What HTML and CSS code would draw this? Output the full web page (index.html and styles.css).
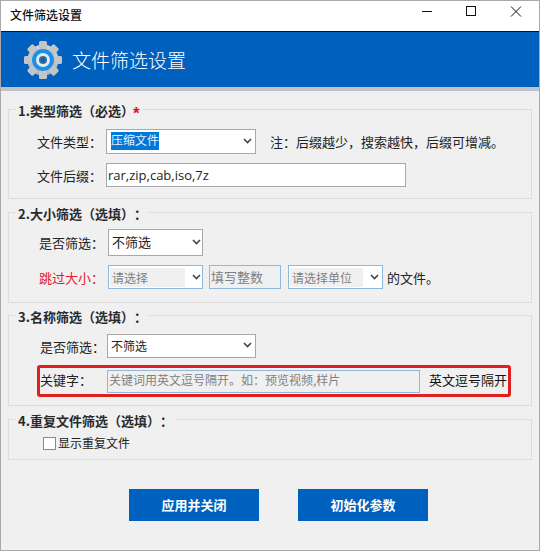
FILE: index.html
```html
<!DOCTYPE html>
<html lang="zh-CN">
<head>
<meta charset="utf-8">
<title>文件筛选设置</title>
<link rel="stylesheet" href="styles.css">
</head>
<body>
<div class="window">
  <div class="titlebar">
    <span class="title">文件筛选设置</span>
    <div class="winctrls">
      <svg width="100" height="16" viewBox="0 0 100 16" fill="none" stroke="#111" stroke-width="1">
        <path d="M0 6.5H10"/>
        <rect x="44.5" y="1.5" width="9" height="9"/>
        <path d="M89 1.5L99 11.5M99 1.5L89 11.5"/>
      </svg>
    </div>
  </div>
  <div class="banner">
    <svg class="gear" width="40" height="40" viewBox="-20 -20 40 40">
      <defs>
        <linearGradient id="g" x1="0" y1="0" x2="0" y2="1">
          <stop offset="0" stop-color="#d4d6d8"/>
          <stop offset="1" stop-color="#aeb3b8"/>
        </linearGradient>
      </defs>
      <g fill="url(#g)">
        <circle r="15.5"/>
      </g>
      <g fill="#c3c6c9">
        <rect x="-4" y="-19" width="8" height="38" rx="1.5"/>
        <rect x="-4" y="-19" width="8" height="38" rx="1.5" transform="rotate(45)"/>
        <rect x="-4" y="-19" width="8" height="38" rx="1.5" transform="rotate(90)"/>
        <rect x="-4" y="-19" width="8" height="38" rx="1.5" transform="rotate(135)"/>
      </g>
      <circle r="11" fill="#1d8fe6"/>
      <circle r="7" fill="#e4ebf0"/>
      <circle r="4" fill="#2d6ea8"/>
      <circle r="2" fill="#1a5d9c"/>
    </svg>
    <span class="banner-title">文件筛选设置</span>
  </div>
  <div class="strip"></div>
  <div class="content">
    <fieldset class="group g1">
      <legend>1.类型筛选（必选）<span class="star">*</span></legend>
      <div class="row r1a">
        <label class="lbl">文件类型：</label>
        <div class="select s-type"><span class="picked">压缩文件</span><svg class="chev" width="9" height="6" viewBox="0 0 9 6"><path d="M1 1l3.5 3.5L8 1" fill="none" stroke="#444" stroke-width="1.6"/></svg></div>
        <span class="note">注：后缀越少，搜索越快，后缀可增减。</span>
      </div>
      <div class="row r1b">
        <label class="lbl">文件后缀：</label>
        <input class="field f-ext" type="text" value="rar,zip,cab,iso,7z">
      </div>
    </fieldset>

    <fieldset class="group g2">
      <legend>2.大小筛选（选填）：</legend>
      <div class="row r2a">
        <label class="lbl l2">是否筛选：</label>
        <div class="select s-size"><span class="big">不筛选</span><svg class="chev" width="9" height="6" viewBox="0 0 9 6"><path d="M1 1l3.5 3.5L8 1" fill="none" stroke="#444" stroke-width="1.6"/></svg></div>
      </div>
      <div class="row r2b">
        <label class="lbl l2 red">跳过大小：</label>
        <div class="select dis s-pick"><span class="grayfill">请选择</span><svg class="chev" width="9" height="6" viewBox="0 0 9 6"><path d="M1 1l3.5 3.5L8 1" fill="none" stroke="#444" stroke-width="1.6"/></svg></div>
        <input class="field dis f-num" type="text" placeholder="填写整数" disabled>
        <div class="select dis s-unit"><span class="grayfill">请选择单位</span><svg class="chev" width="9" height="6" viewBox="0 0 9 6"><path d="M1 1l3.5 3.5L8 1" fill="none" stroke="#444" stroke-width="1.6"/></svg></div>
        <span class="suffix">的文件。</span>
      </div>
    </fieldset>

    <fieldset class="group g3">
      <legend>3.名称筛选（选填）：</legend>
      <div class="row r3a">
        <label class="lbl l3">是否筛选：</label>
        <div class="select s-name"><span>不筛选</span><svg class="chev" width="9" height="6" viewBox="0 0 9 6"><path d="M1 1l3.5 3.5L8 1" fill="none" stroke="#444" stroke-width="1.6"/></svg></div>
      </div>
      <div class="row keyrow">
        <label class="lbl l-key">关键字：</label>
        <input class="field dis f-key" type="text" placeholder="关键词用英文逗号隔开。如：预览视频,样片" disabled>
        <span class="hint">英文逗号隔开</span>
      </div>
    </fieldset>

    <fieldset class="group g4">
      <legend>4.重复文件筛选（选填）：</legend>
      <label class="check"><input type="checkbox"><span class="check-text">显示重复文件</span></label>
    </fieldset>

    <div class="actions">
      <button class="btn" type="button">应用并关闭</button>
      <button class="btn" type="button">初始化参数</button>
    </div>
  </div>
</div>
</body>
</html>
```

FILE: styles.css
```css
* { box-sizing: border-box; }
html, body { margin: 0; padding: 0; }
body {
  width: 540px;
  height: 551px;
  overflow: hidden;
  font-family: "Noto Sans CJK SC", "Noto Sans", sans-serif;
  font-size: 13px;
  color: #222;
  text-spacing-trim: space-all;
}
.window {
  width: 540px;
  height: 551px;
  border: 1px solid #a9a9a9;
  background: #f0f0f0;
  display: flex;
  flex-direction: column;
}
.titlebar {
  height: 31px;
  flex: none;
  background: #fff;
  border-bottom: 1px solid #111;
  display: flex;
  align-items: center;
  justify-content: space-between;
  padding: 0 17px 0 9px;
}
.title { font-size: 12px; font-weight: 500; color: #111; padding-bottom: 3px; }
.winctrls { display: flex; height: 16px; margin-top: -6px; }
.banner {
  height: 55px;
  flex: none;
  background: #0060bd;
  display: flex;
  align-items: center;
  padding-left: 22px;
  gap: 9px;
}
.gear { flex: none; margin-top: 1px; }
.banner-title { color: #fff; font-size: 19px; font-weight: 300; }
.strip { height: 4px; flex: none; background: #bfc3c9; }
.content { padding: 9px 7px 0; }

.group {
  margin: 0;
  padding: 0;
  width: 524px;
  border: 1px solid #dcdcdc;
}
.group legend {
  margin-left: 7px;
  padding: 0 2px;
  font-size: 13px;
  height: 18px;
  line-height: 21px;
  font-weight: 700;
  color: #2a2a2a;
}
.star {
  color: #e0102a;
  margin-left: -1px;
  font-family: "Liberation Sans", sans-serif;
  font-size: 17px;
  line-height: 0;
  vertical-align: -3px;
}
.g1 { height: 99px; padding-top: 11px; }
.g2 { height: 100px; margin-top: 4px; padding-top: 8px; }
.g3 { height: 100px; margin-top: 3px; padding-top: 10px; }
.g4 { height: 50px; margin-top: 4px; padding-top: 7px; }

.row { display: flex; align-items: center; }
.r1a { height: 25px; padding-left: 28px; }
.r1b { height: 24px; margin-top: 9px; padding-left: 28px; }
.r2a { height: 27px; padding-left: 30px; }
.r2b { height: 24px; margin-top: 9px; padding-left: 30px; }
.r3a { height: 24px; padding-left: 31px; }

.lbl { flex: none; width: 69px; white-space: nowrap; }
.l2 { width: 69px; }
.l3 { width: 67px; }
.l-key { width: 67px; padding-bottom: 3px; }
.red { color: #e0202a; }

.select {
  flex: none;
  height: 100%;
  background: #fff;
  border: 1px solid #a8a8a8;
  display: flex;
  align-items: center;
  justify-content: space-between;
  padding: 0 3px 0 3px;
  font-size: 12px;
  color: #222;
}
.s-type { width: 150px; padding-bottom: 2px; }
.picked {
  background: #0078d7;
  color: #e4f2ff;
  line-height: 15px;
  padding: 0 0 3px;
  margin-left: 1px;
}
.note { margin-left: 14px; white-space: nowrap; }
.s-size { width: 95px; padding-right: 1px; padding-bottom: 2px; }
.big { font-size: 13px; }
.dis { border-color: #8fb8dc; }
.s-pick { width: 95px; padding-left: 1px; padding-right: 1px; }
.s-unit { width: 95px; padding-left: 1px; margin-left: 7px; }
.grayfill {
  flex: 1;
  background: #f0f0f0;
  color: #808080;
  line-height: 19px;
  padding-left: 2px;
  margin-right: 7px;
  white-space: nowrap;
}
.suffix { margin-left: 4px; white-space: nowrap; }
.s-name { width: 149px; padding-bottom: 2px; }

.field {
  flex: none;
  height: 100%;
  border: 1px solid #a8a8a8;
  border-radius: 0;
  background: #fff;
  font-family: "Open Sans", "Noto Sans CJK SC", sans-serif;
  font-size: 13px;
  color: #222;
  padding: 0 1px;
  margin: 0;
  outline: none;
}
.field.dis { background: #f0f0f0; border-color: #8fb8dc; }
.field::placeholder { color: #808080; opacity: 1; font-family: "Noto Sans CJK SC", sans-serif; }
.f-ext { width: 300px; }
.f-num { width: 72px; margin-left: 6px; padding-left: 1px; }
.f-key { width: 313px; height: 23px; font-size: 12px; padding: 0 0 2px 1px; }
.keyrow {
  height: 32px;
  width: 474px;
  margin: 7px 0 0 28px;
  border: 3px solid #e0201c;
  border-radius: 3px;
}
.hint { margin-left: 9px; padding-bottom: 3px; white-space: nowrap; color: #111; }

.check { display: flex; align-items: center; margin-left: 34px; font-size: 12px; height: 16px; }
.check input {
  appearance: none;
  width: 13px;
  height: 13px;
  margin: 0 2px 0 0;
  background: #fff;
  border: 1px solid #8a8a8a;
}
.check-text { padding-bottom: 2px; }
.actions { display: flex; gap: 39px; margin-top: 29px; padding-left: 121px; }
.btn {
  width: 130px;
  height: 32px;
  border: 0;
  padding: 0 0 2px;
  background: #0060bd;
  color: #fff;
  font-family: inherit;
  font-size: 13px;
  font-weight: 700;
}
```
